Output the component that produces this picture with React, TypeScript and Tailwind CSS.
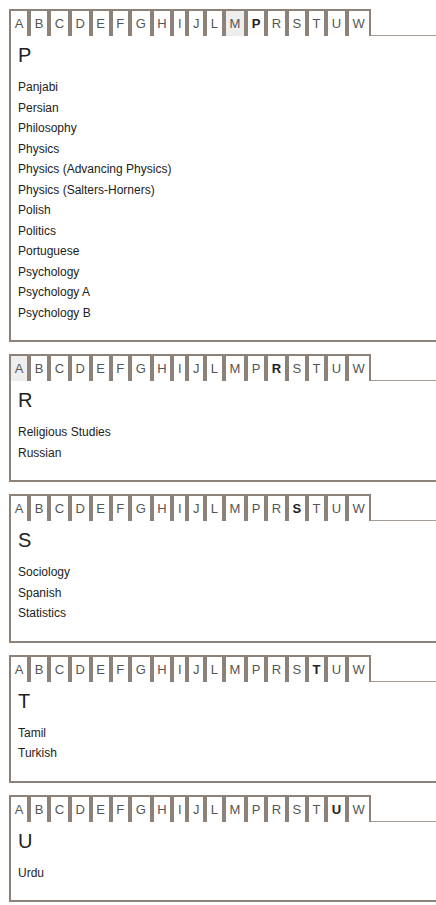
import React from "react";

const letters = ["A", "B", "C", "D", "E", "F", "G", "H", "I", "J", "L", "M", "P", "R", "S", "T", "U", "W"];

interface Section {
  letter: string;
  shaded?: string;
  subjects: string[];
}

const sections: Section[] = [
  {
    letter: "P",
    shaded: "M",
    subjects: [
      "Panjabi",
      "Persian",
      "Philosophy",
      "Physics",
      "Physics (Advancing Physics)",
      "Physics (Salters-Horners)",
      "Polish",
      "Politics",
      "Portuguese",
      "Psychology",
      "Psychology A",
      "Psychology B",
    ],
  },
  { letter: "R", shaded: "A", subjects: ["Religious Studies", "Russian"] },
  { letter: "S", subjects: ["Sociology", "Spanish", "Statistics"] },
  { letter: "T", subjects: ["Tamil", "Turkish"] },
  { letter: "U", subjects: ["Urdu"] },
];

function Tabs({ active, shaded }: { active: string; shaded?: string }) {
  return (
    <div className="flex items-end">
      {letters.map((l) => {
        const isActive = l === active;
        return (
          <span
            key={l}
            className={
              "relative z-10 -mb-px border-2 border-b-0 border-[#8c8279] px-[3.7px] py-1 text-[13px] leading-[17px] " +
              (isActive
                ? "bg-white font-bold text-[#222]"
                : l === shaded
                ? "bg-[#eeeeee] text-[#555]"
                : "bg-white text-[#555]")
            }
          >
            {l}
          </span>
        );
      })}
    </div>
  );
}

function LetterPanel({ section }: { section: Section }) {
  return (
    <div className="mb-3">
      <Tabs active={section.letter} shaded={section.shaded} />
      <div className="-mr-6 border-b-2 border-l-2 border-t border-[#8c8279] border-t-[#a59d96] bg-white px-[7px] pb-[17px] pt-[7px]">
        <h2 className="mb-[10px] text-[20px] leading-6 text-[#222]">{section.letter}</h2>
        <ul>
          {section.subjects.map((s) => (
            <li key={s} className="text-[12px] leading-[20.5px] text-[#222]">
              {s}
            </li>
          ))}
        </ul>
      </div>
    </div>
  );
}

export default function App() {
  return (
    <div
      className="min-h-[905px] w-full overflow-hidden bg-white pl-[9px] pt-[9px]"
      style={{ fontFamily: '"Liberation Sans", Arial, sans-serif' }}
    >
      {sections.map((s) => (
        <LetterPanel key={s.letter} section={s} />
      ))}
    </div>
  );
}
